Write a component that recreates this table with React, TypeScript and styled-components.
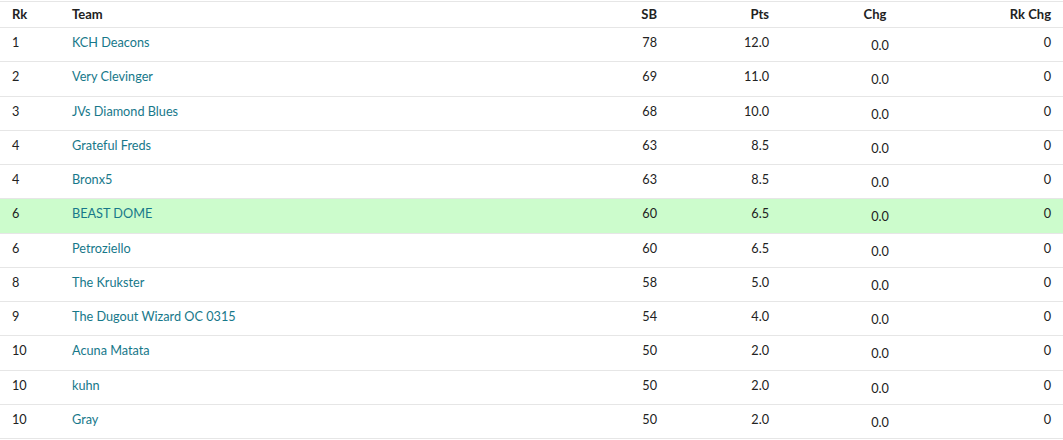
import styled, { createGlobalStyle } from "styled-components"

const GlobalStyle = createGlobalStyle`
  body {
    margin: 0;
    background: #fff;
    font-family: Lato, "Open Sans", sans-serif;
    color: #222;
  }
`

const Table = styled.table`
  width: 1063px;
  margin-top: 1px;
  border-collapse: collapse;
  table-layout: fixed;
  font-size: 12.7px;
`

const Head = styled.th<{ $align?: string }>`
  padding: 5px 12px;
  height: 15px;
  line-height: 15px;
  font-size: 13px;
  font-weight: 700;
  text-align: ${(p) => p.$align || "left"};
  vertical-align: middle;
  border-top: 1px solid #e6e6e6;
  border-bottom: 1px solid #e6e6e6;
  color: #222;
`

const Row = styled.tr<{ $mine?: boolean }>`
  background: ${(p) => (p.$mine ? "#ccfccc" : "transparent")};
`

const Cell = styled.td<{ $align?: string; $low?: boolean }>`
  padding: ${(p) => (p.$low ? "9px 12px 7px" : "6px 12px 10px")};
  line-height: 17.25px;
  text-align: ${(p) => p.$align || "left"};
  vertical-align: top;
  border-bottom: 1px solid #e6e6e6;
  white-space: nowrap;
`

const TeamLink = styled.a`
  color: #17788a;
  text-decoration: none;
`

const ChgValue = styled.span`
  padding-left: 10px;
`

const rows: [string, string, number, string][] = [
  ["1", "KCH Deacons", 78, "12.0"],
  ["2", "Very Clevinger", 69, "11.0"],
  ["3", "JVs Diamond Blues", 68, "10.0"],
  ["4", "Grateful Freds", 63, "8.5"],
  ["4", "Bronx5", 63, "8.5"],
  ["6", "BEAST DOME", 60, "6.5"],
  ["6", "Petroziello", 60, "6.5"],
  ["8", "The Krukster", 58, "5.0"],
  ["9", "The Dugout Wizard OC 0315", 54, "4.0"],
  ["10", "Acuna Matata", 50, "2.0"],
  ["10", "kuhn", 50, "2.0"],
  ["10", "Gray", 50, "2.0"],
]

const App = () => (
  <>
    <GlobalStyle />
    <Table>
      <colgroup>
        <col style={{ width: 60 }} />
        <col />
        <col style={{ width: 112 }} />
        <col style={{ width: 112 }} />
        <col style={{ width: 188 }} />
        <col style={{ width: 94 }} />
      </colgroup>
      <thead>
        <tr>
          <Head>Rk</Head>
          <Head>Team</Head>
          <Head $align="right">SB</Head>
          <Head $align="right">Pts</Head>
          <Head $align="center">Chg</Head>
          <Head $align="right">Rk Chg</Head>
        </tr>
      </thead>
      <tbody>
        {rows.map(([rk, team, sb, pts]) => (
          <Row key={team} $mine={team === "BEAST DOME"}>
            <Cell>{rk}</Cell>
            <Cell>
              <TeamLink href="#">{team}</TeamLink>
            </Cell>
            <Cell $align="right">{sb}</Cell>
            <Cell $align="right">{pts}</Cell>
            <Cell $align="center" $low>
              <ChgValue>0.0</ChgValue>
            </Cell>
            <Cell $align="right">0</Cell>
          </Row>
        ))}
      </tbody>
    </Table>
  </>
)

export default App
